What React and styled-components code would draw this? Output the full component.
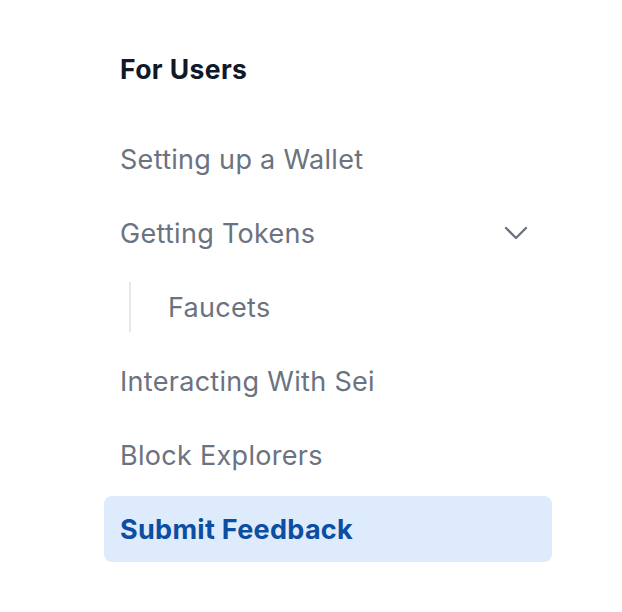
import React from "react";
import styled, { createGlobalStyle } from "styled-components";
import { ChevronDown } from "lucide-react";

const GlobalStyle = createGlobalStyle`
  body {
    margin: 0;
    background: #ffffff;
    font-family: "Inter", "Noto Sans", sans-serif;
  }
`;

const Sidebar = styled.nav`
  width: 448px;
  padding: 49px 0 0 104px;
`;

const Heading = styled.h2`
  margin: 0 0 37px;
  padding: 0 16px;
  height: 40px;
  line-height: 40px;
  font-size: 26.5px;
  font-weight: 700;
  letter-spacing: 0.4px;
  color: #111827;
`;

const List = styled.ul`
  list-style: none;
  margin: 0;
  padding: 0;
  display: flex;
  flex-direction: column;
  gap: 8px;
`;

const Item = styled.li`
  display: flex;
  align-items: center;
  justify-content: space-between;
  height: ${p => (p.$sub ? 50 : 66)}px;
  padding: 0 16px;
  border-radius: 8px;
  font-size: 27px;
  letter-spacing: 0.3px;
  font-weight: ${p => (p.$active ? 700 : 400)};
  color: ${p => (p.$active ? "#0b4ea2" : "#6b7280")};
  background: ${p => (p.$active ? "#deebfc" : "transparent")};
`;

const SubList = styled.ul`
  list-style: none;
  margin: 8px 0 8px 25px;
  padding: 0 0 0 21px;
  border-left: 2px solid #e5e7eb;
`;

const Chevron = styled(ChevronDown)`
  flex-shrink: 0;
  color: #6b7280;
`;

const App = () => {
  return (
    <>
      <GlobalStyle />
      <Sidebar>
        <Heading>For Users</Heading>
        <List>
          <Item>Setting up a Wallet</Item>
          <Item>
            Getting Tokens
            <Chevron size={40} strokeWidth={1.4} />
          </Item>
          <SubList>
            <Item $sub>Faucets</Item>
          </SubList>
          <Item>Interacting With Sei</Item>
          <Item>Block Explorers</Item>
          <Item $active>Submit Feedback</Item>
        </List>
      </Sidebar>
    </>
  );
};

export default App;
